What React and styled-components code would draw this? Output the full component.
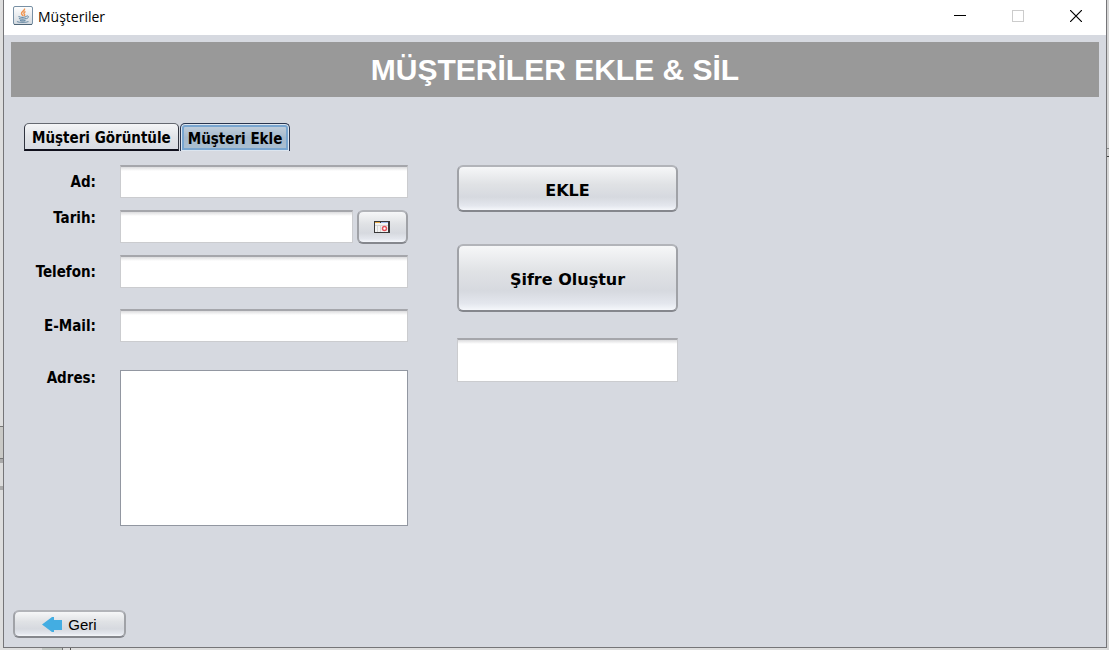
import React from "react";
import styled, { createGlobalStyle, css } from "styled-components";

const GlobalStyle = createGlobalStyle`
  *, *::before, *::after { box-sizing: border-box; }
  body { margin: 0; background: #e4e4e4; color: #000; }
  button, input, textarea { font: inherit; color: inherit; margin: 0; }
`;

const uiFont = `"DejaVu Sans Condensed", "DejaVu Sans", Tahoma, sans-serif`;

const Desktop = styled.div`
  min-height: 100vh;
  padding: 0 2px 2px 3px;
  display: flex;
  background:
    linear-gradient(#777, #777) 62px 100% / 1px 2px no-repeat,
    linear-gradient(#555, #555) 70px 100% / 1px 2px no-repeat,
    linear-gradient(#c2c6c2, #c2c6c2) 42px 100% / 20px 2px no-repeat,
    linear-gradient(
      transparent 426px, #777 426px 427px, #c9c9c6 427px 458px, #777 458px 459px,
      #aaa 459px 463px, #dcdcdc 463px 486px, #aaa 486px 490px, transparent 490px
    ) 0 0 / 3px 100% no-repeat,
    linear-gradient(
      #d6d6d6 148px, #888 148px 149px, #d0d0d0 149px 156px, #444 156px 157px, #d6d6d6 157px
    ) 100% 0 / 2px 100% no-repeat,
    #dedede;
`;

const Window = styled.div`
  flex: 1;
  display: flex;
  flex-direction: column;
  border: 1px solid #757578;
  border-top: 0;
  background: #d6d9e0;
`;

const TitleBar = styled.header`
  display: flex;
  align-items: center;
  height: 35px;
  padding: 0 1px 0 9px;
  background: #fff;
`;

const WindowTitle = styled.span`
  flex: 1;
  padding: 0 0 2px 5px;
  font: 14px/20px "Open Sans", "Segoe UI", sans-serif;
`;

const JavaIcon = styled.svg`
  display: block;
  width: 20px;
  height: 20px;
  margin-bottom: 4px;
`;

const WindowControl = styled.button`
  display: flex;
  align-items: center;
  justify-content: center;
  width: 58px;
  height: 32px;
  padding: 0;
  border: 0;
  background: none;
  align-self: flex-start;
`;

const Banner = styled.h1`
  margin: 7px 7px 0;
  padding-top: 1px;
  background: #999;
  color: #fff;
  text-align: center;
  font: bold 30px/54px "Liberation Sans", Arial, sans-serif;
`;

const TabList = styled.div`
  display: flex;
  margin: 26px 0 0 20px;
  height: 28px;
`;

const Tab = styled.button`
  padding: 2px 7px 0;
  border: 1px solid #30343f;
  border-top-color: #656971;
  border-bottom: 2px solid #10101c;
  border-radius: 5px 5px 0 0;
  background: linear-gradient(#f4f5f7, #e2e4e8 50%, #d8dbe2);
  font: bold 15px/22px ${uiFont};
  white-space: nowrap;

  ${({ $active }) =>
    $active &&
    css`
      margin-left: 1px;
      border-color: #28344e;
      border-bottom: 0;
      background: linear-gradient(#c6d2de, #a5b9cd 50%, #abc0d1);
      box-shadow: inset 0 0 0 1px #dce5ef, inset 0 0 0 3px #78a5d0;
    `}
`;

const Panel = styled.main`
  display: flex;
  align-items: flex-start;
  gap: 49px;
  padding: 14px 20px 0;
`;

const Form = styled.form`
  display: flex;
  flex-direction: column;
  width: 384px;
`;

const Row = styled.div`
  display: grid;
  grid-template-columns: 72px 1fr;
  column-gap: 24px;
  align-items: ${({ $top }) => ($top ? "start" : "center")};
  margin-bottom: ${({ $gap }) => $gap}px;
`;

const Label = styled.label`
  text-align: right;
  font: bold 15px/16px ${uiFont};
`;

const TextField = styled.input`
  display: block;
  width: 100%;
  min-width: 0;
  height: ${({ $tall }) => ($tall ? 44 : 33)}px;
  padding: 4px 6px;
  border: 1px solid #cbcccf;
  border-top: 2px solid #a5a6ab;
  border-radius: 0;
  background: linear-gradient(#dcdcde, #fff 4px);
  outline: 0;
  font: 14px/20px ${uiFont};
`;

const TextArea = styled.textarea`
  display: block;
  width: 100%;
  height: 156px;
  padding: 4px 6px;
  border: 1px solid #9297a1;
  border-radius: 0;
  background: #fff;
  outline: 0;
  resize: none;
  font: 14px/20px ${uiFont};
`;

const DateGroup = styled.div`
  display: flex;
  gap: 4px;
`;

const NimbusButton = styled.button`
  display: flex;
  align-items: center;
  justify-content: center;
  border: 2px solid #a0a2a7;
  border-top-color: #b2b4b9;
  border-bottom-color: #85878d;
  border-radius: 6px;
  background: linear-gradient(#f6f7f8, #e0e2e5 40%, #d6d9df 70%, #e4e7ee 90%, #f5f7fb);
  background-clip: padding-box;
`;

const CalendarButton = styled(NimbusButton)`
  flex: none;
  width: 51px;
  height: 34px;
  padding: 0 2px 0 0;
`;

const ActionButton = styled(NimbusButton)`
  height: ${({ $tall }) => ($tall ? 68 : 47)}px;
  padding: 4px 8px 0;
  font: bold 16px/20px "DejaVu Sans", Verdana, sans-serif;
`;

const Actions = styled.div`
  display: flex;
  flex-direction: column;
  width: 221px;
`;

const Spacer = styled.div`
  height: ${({ $size }) => $size}px;
`;

const Footer = styled.footer`
  margin-top: auto;
  padding: 0 9px 9px;
`;

const BackButton = styled(NimbusButton)`
  gap: 5px;
  width: 113px;
  height: 28px;
  padding: 1px 0 0;
  font: 15px/20px "Liberation Sans", Arial, sans-serif;
`;

export default function App() {
  return (
    <>
      <GlobalStyle />
      <Desktop>
        <Window>
          <TitleBar>
            <JavaIcon viewBox="0 0 20 20" aria-hidden="true">
              <defs>
                <linearGradient id="tile" x2="0" y2="1">
                  <stop stopColor="#fff" />
                  <stop offset="1" stopColor="#d3d9df" />
                </linearGradient>
              </defs>
              <rect x=".5" y=".5" width="19" height="18" rx="1.5" fill="url(#tile)" stroke="#7890a5" />
              <path d="M1 18.5h18" stroke="#4f6678" />
              <path d="M11.5 2.5c1 2-3.5 3-3 5 .2 1 1.200 1.500 1.200 2.500M12.500 5.500c-2 1-2 2-1 3 .4.6 0 1-.8 1.500" fill="none" stroke="#ef9450" strokeWidth="1.400" />
              <path d="M5.500 10.500c2 1 6 1 8 0M6 12.500c2 .8 5 .8 7 0M7 14.300c1.500.6 4 .6 5.500 0" fill="none" stroke="#6689a5" strokeWidth="1.300" />
              <path d="M13.500 10c2.800-.6 2.500 2-.3 2.800" fill="none" stroke="#6689a5" />
              <path d="M4 15.500c2 1.300 9 1.300 11.500 0" fill="none" stroke="#7895ac" strokeWidth="1.200" />
            </JavaIcon>
            <WindowTitle>Müşteriler</WindowTitle>
            <WindowControl aria-label="Simge durumuna küçült">
              <svg width="12" height="12" shapeRendering="crispEdges">
                <path d="M0 5.500h12" stroke="#000" />
              </svg>
            </WindowControl>
            <WindowControl aria-label="Ekranı kapla" disabled>
              <svg width="12" height="12" shapeRendering="crispEdges">
                <rect x=".5" y=".5" width="11" height="11" fill="none" stroke="#ccc" />
              </svg>
            </WindowControl>
            <WindowControl aria-label="Kapat">
              <svg width="12" height="12">
                <path d="M0 0l12 12M12 0L0 12" stroke="#000" strokeWidth="1.200" />
              </svg>
            </WindowControl>
          </TitleBar>

          <Banner>MÜŞTERİLER EKLE &amp; SİL</Banner>

          <TabList role="tablist">
            <Tab role="tab" aria-selected="false">Müşteri Görüntüle</Tab>
            <Tab role="tab" aria-selected="true" $active>Müşteri Ekle</Tab>
          </TabList>

          <Panel>
            <Form onSubmit={(e) => e.preventDefault()}>
              <Row $gap={12}>
                <Label htmlFor="ad">Ad:</Label>
                <TextField id="ad" />
              </Row>
              <Row $gap={11} $top>
                <Label htmlFor="tarih">Tarih:</Label>
                <DateGroup>
                  <TextField id="tarih" />
                  <CalendarButton type="button" aria-label="Tarih seç">
                    <svg width="16" height="12" shapeRendering="crispEdges" aria-hidden="true">
                      <path fill="#383838" d="M0 0h16v12H0z" />
                      <path fill="#f3f3f3" d="M1 2h13v9H1z" />
                      <path fill="#e8ab45" d="M1 1h5v1H1z" />
                      <path fill="#9db8ea" d="M7 1h7v1H7z" />
                      <path stroke="#d5d5d5" d="M3.500 4v7M6.500 4v7M1 4.500h13" />
                      <circle cx="10.500" cy="7.500" r="2" fill="#fff" stroke="#e4545c" strokeWidth="1.500" shapeRendering="auto" />
                    </svg>
                  </CalendarButton>
                </DateGroup>
              </Row>
              <Row $gap={21}>
                <Label htmlFor="telefon">Telefon:</Label>
                <TextField id="telefon" type="tel" />
              </Row>
              <Row $gap={28}>
                <Label htmlFor="email">E-Mail:</Label>
                <TextField id="email" type="email" />
              </Row>
              <Row $gap={0} $top>
                <Label htmlFor="adres">Adres:</Label>
                <TextArea id="adres" />
              </Row>
            </Form>

            <Actions>
              <ActionButton type="button">EKLE</ActionButton>
              <Spacer $size={32} />
              <ActionButton type="button" $tall>Şifre Oluştur</ActionButton>
              <Spacer $size={26} />
              <TextField $tall aria-label="Şifre" />
            </Actions>
          </Panel>

          <Footer>
            <BackButton type="button">
              <svg width="21" height="16" viewBox="0 0 21 16" aria-hidden="true">
                <path d="M0 7.500L10 0h2v3h8v10h-8v2h-2z" fill="#43ade2" />
              </svg>
              Geri
            </BackButton>
          </Footer>
        </Window>
      </Desktop>
    </>
  );
}
